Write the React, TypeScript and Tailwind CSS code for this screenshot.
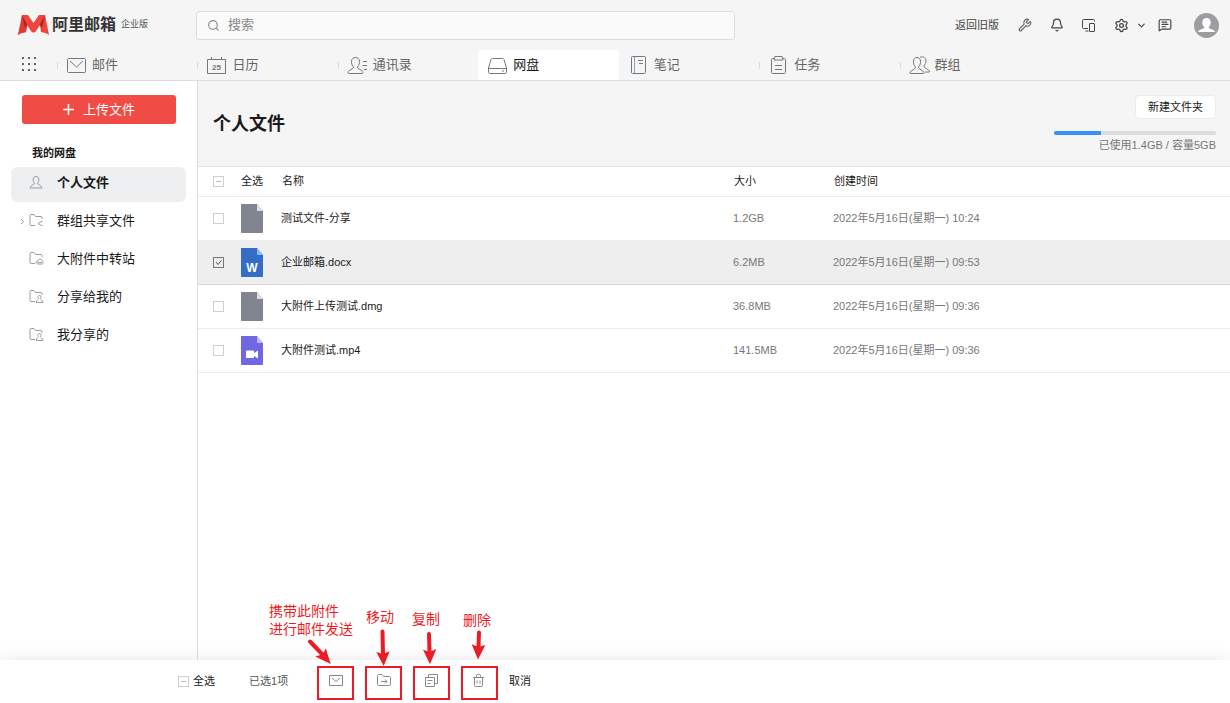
import { useState } from 'react';
import type { ReactNode } from 'react';
import { Bell, ChevronDown, ChevronRight, MessageSquareText, Search, Settings, Wrench } from 'lucide-react';

type FileKind = 'file' | 'word' | 'video';

const files: { id: number; name: string; size: string; created: string; kind: FileKind }[] = [
  { id: 1, name: '测试文件-分享', size: '1.2GB', created: '2022年5月16日(星期一) 10:24', kind: 'file' },
  { id: 2, name: '企业邮箱.docx', size: '6.2MB', created: '2022年5月16日(星期一) 09:53', kind: 'word' },
  { id: 3, name: '大附件上传测试.dmg', size: '36.8MB', created: '2022年5月16日(星期一) 09:36', kind: 'file' },
  { id: 4, name: '大附件测试.mp4', size: '141.5MB', created: '2022年5月16日(星期一) 09:36', kind: 'video' },
];

const fileColors = {
  file: ['#808590', '#dce0e9'],
  word: ['#346dc6', '#94b2f8'],
  video: ['#7068e3', '#c0bafa'],
};

function Logo() {
  return (
    <svg width="31" height="20" viewBox="0 0 31 20" className="shrink-0">
      <path d="M4 0h6l5.500 8L21 0h6l4 20c-2.500-2-5-2.500-8-3l-1-7-4 6c-1.500 2-3.500 2-5 0L9 10l-1 7c-3 .5-5.500 1-8 3z" fill="#ee463c" />
      <path d="M4 0l5 10-1 7c-3 .5-5.500 1-8 3l3-12z" fill="#e03a35" />
      <path d="M4 0l6.500 12L9 10l-2 3z" fill="#a82428" />
      <path d="M27 0l-6.500 12L22 10l2 3z" fill="#a82428" />
    </svg>
  );
}

function TabIcon({ children }: { children: ReactNode }) {
  return (
    <svg width="22" height="20" viewBox="0 0 22 20" fill="none" stroke="currentColor" strokeWidth="1" className="shrink-0 text-[#777]">
      {children}
    </svg>
  );
}

const tabs = [
  {
    label: '邮件',
    icon: (
      <TabIcon>
        <rect x="1.5" y="3.5" width="18" height="14" rx="1" />
        <path d="M4 6l6.5 6L17 6" />
      </TabIcon>
    ),
  },
  {
    label: '日历',
    icon: (
      <TabIcon>
        <path d="M1.500 4.500h18v14h-18zM5.500 2v3M15.500 2v3" />
        <text x="10.500" y="15" textAnchor="middle" fontSize="8" fontWeight="700" fill="currentColor" stroke="none">25</text>
      </TabIcon>
    ),
  },
  {
    label: '通讯录',
    icon: (
      <TabIcon>
        <path d="M6.500 12C3.500 9 3.500 2.500 8.500 2.500S13.500 9 10.500 12c-.5 2.500 5.500 2.500 5.500 5.500 0 .8-.5 1-1 1H2c-.6 0-1-.2-1-1C1 14.500 7 14.500 6.500 12zM16 6.500h4M15.500 10.500H20M17 14.500h3" />
      </TabIcon>
    ),
  },
  {
    label: '网盘',
    icon: (
      <TabIcon>
        <path d="M5.500 3.500h10c.8 0 1.300.4 1.500 1l2.500 8.500v4c0 .9-.6 1.500-1.500 1.500H3c-.9 0-1.500-.6-1.500-1.500v-4L4 4.500c.2-.6.700-1 1.500-1zM2 13.500h17M15 16h2" />
      </TabIcon>
    ),
  },
  {
    label: '笔记',
    icon: (
      <TabIcon>
        <rect x="3.500" y="1.500" width="14" height="17" rx="1" />
        <path d="M6.500 2v16" stroke="#7aa7cf" />
        <path d="M10 5.500h5M11 8.500h4" />
      </TabIcon>
    ),
  },
  {
    label: '任务',
    icon: (
      <TabIcon>
        <path d="M6 3.500H4.500c-.6 0-1 .4-1 1v13c0 .6.400 1 1 1h12c.6 0 1-.4 1-1v-13c0-.6-.4-1-1-1H15M7 1.500h7l1 3.500H6zM7 10.500h7M7 14.500h7" />
      </TabIcon>
    ),
  },
  {
    label: '群组',
    icon: (
      <TabIcon>
        <path d="M6.500 12C3.500 9 3.500 2.500 8 2.500s4.500 6.500 1.500 9.500c-.5 2.500 5.500 3 5.500 6 0 .4-.3.500-.5.500h-13c-.4 0-.5-.2-.5-.5 0-3 6-3.500 5.500-6z" />
        <path d="M11 2.500c2-1.500 6-.5 6 3.500 0 2-1 3.500-2 5-.5 2.500 5.500 3 5.500 5.500 0 .4-.3.500-.5.500h-4" />
      </TabIcon>
    ),
  },
];

const folderPath = 'M6 11.500H2c-.6 0-1-.4-1-1v-9c0-.6.400-1 1-1h3L6.500 2.500H12c.6 0 1 .4 1 1V5';
const personPath = 'M9.500 8.500c-1-1-.8-3 1-3s2 2 1 3c0 1.200 2 1.500 2.500 4H7c.4-2.500 2.500-2.800 2.500-4z';

const navItems = [
  { label: '个人文件', icon: <path d="M5.500 7C3.500 5 3.500.5 7 .5S10.500 5 8.500 7c-.3 1.800 4 1.800 4.500 5H1C1.500 8.800 5.800 8.800 5.500 7z" /> },
  { label: '群组共享文件', icon: <><path d={folderPath} /><path d="M12.500 7.500L9 9.500l3.500 2M12 7.500h1.500M12 11.500h1.500" /></>, expandable: true },
  { label: '大附件中转站', icon: <><path d={folderPath} /><path d="M8.500 12c-2.500-1-1.500-3.500.5-3 .5-2.500 3.500-2.500 4 0 2 .5 1.500 3 0 3zM8.500 10.500H13" /></> },
  { label: '分享给我的', icon: <><path d={folderPath} /><path d={personPath} /></> },
  { label: '我分享的', icon: <><path d={folderPath} /><path d={personPath} /></> },
];

const actions = [
  { label: '发送邮件', icon: <path d="M.5 1.500h13v10H.5zM3 4l4 3.500L11 4" /> },
  { label: '移动', icon: <path d="M1.500.5H5L6.500 2.500h6c.6 0 1 .4 1 1v7c0 .6-.4 1-1 1h-11c-.6 0-1-.4-1-1v-9c0-.6.400-1 1-1zM4 7.500h6M8 5.500l2 2-2 2" /> },
  { label: '复制', icon: <path d="M.5 3.500h9v9h-9zM3.500 3V.5h9v9H10M2.500 6.500h5M2.500 9.500h3" /> },
  { label: '删除', icon: <path d="M0 3.500h11M3.500 3V1.500c0-.6.400-1 1-1h2c.6 0 1 .4 1 1V3M1.500 3.500v8c0 .6.400 1 1 1h6c.6 0 1-.4 1-1v-8M4 6.500v3M7 6.500v3" /> },
];

function FileIcon({ kind }: { kind: FileKind }) {
  const [body, fold] = fileColors[kind];
  return (
    <svg width="22" height="29" viewBox="0 0 22 29" className="block">
      <path d="M1 0h15l6 7v21c0 .6-.4 1-1 1H1c-.6 0-1-.4-1-1V1c0-.6.400-1 1-1z" fill={body} />
      <path d="M16 0l6 7h-5c-.6 0-1-.4-1-1z" fill={fold} />
      {kind === 'word' && (
        <text x="11" y="24" textAnchor="middle" fontSize="12" fontWeight="700" fill="#fff">W</text>
      )}
      {kind === 'video' && (
        <path d="M6 14.500h6c.6 0 1 .4 1 1V17l4-2.500v8L13 20v1c0 .6-.4 1-1 1H6c-.6 0-1-.4-1-1v-5.500c0-.6.400-1 1-1z" fill="#fff" />
      )}
    </svg>
  );
}

function Checkbox({ label, checked, partial, onChange }: { label: string; checked: boolean; partial?: boolean; onChange: () => void }) {
  return (
    <span className="relative block h-[11px] w-[11px]">
      <input
        type="checkbox"
        aria-label={label}
        checked={checked}
        onChange={onChange}
        className="block h-[11px] w-[11px] appearance-none border border-[#cfcfcf] bg-white checked:border-[#777] checked:bg-transparent"
      />
      <svg width="11" height="11" viewBox="0 0 11 11" fill="none" className="pointer-events-none absolute inset-0">
        {partial && <path d="M3 5.500h5" stroke="#bbb" />}
        {checked && !partial && <path d="M3 5l2 2.500L8.500 3.500" stroke="#555" />}
      </svg>
    </span>
  );
}

function Annotations() {
  return (
    <div className="pointer-events-none absolute inset-0 text-sm leading-[18px] text-[#ed1c24]">
      <p className="absolute -top-16 -left-12 whitespace-nowrap">携带此附件<br />进行邮件发送</p>
      <p className="absolute -top-[58px] left-[49px] whitespace-nowrap">移动</p>
      <p className="absolute -top-[56px] left-[95px] whitespace-nowrap">复制</p>
      <p className="absolute -top-[55px] left-[146px] whitespace-nowrap">删除</p>
      <svg width="200" height="68" viewBox="0 0 200 68" fill="#ed1c24" stroke="#ed1c24" className="absolute -top-[66px] -left-[17px] max-w-none">
        <path d="M10 41.500L22 54M82.500 31.500L83 54M129 34L129.500 52M179 32.500L178.500 47" strokeWidth="4" strokeLinecap="round" />
        <path d="M30.700 64L15.300 56.500 20.500 55 24 52 25.700 48.300zM83.700 66L76.300 52 83 54 89.700 51.200zM130 64.300L123 49.700 129.500 52 136.300 49zM178 59.500L171.700 44.300 178.500 47 185.300 45z" stroke="none" />
      </svg>
    </div>
  );
}

export default function App() {
  const [activeTab, setActiveTab] = useState('网盘');
  const [activeNav, setActiveNav] = useState('个人文件');
  const [selected, setSelected] = useState<number[]>([2]);

  const allChecked = selected.length === files.length;

  const toggle = (id: number) =>
    setSelected(prev => (prev.includes(id) ? prev.filter(x => x !== id) : [...prev, id]));

  const toggleAll = () => setSelected(allChecked ? [] : files.map(f => f.id));

  return (
    <div className="flex h-screen flex-col bg-white font-['Liberation_Sans','Noto_Sans_CJK_SC',sans-serif] text-[11px] text-[#1a1a1a]">
      <header className="border-b border-[#dcdcdc] bg-[#f5f5f5]">
        <div className="flex h-[50px] items-center">
          <a href="#" className="flex w-[196px] shrink-0 items-center pl-[18px]">
            <Logo />
            <span className="ml-[3px] text-base leading-5 font-bold text-[#333]">阿里邮箱</span>
            <span className="ml-[5px] text-[9px] text-[#555]">企业版</span>
          </a>
          <label className="flex h-[29px] max-w-[539px] flex-1 items-center rounded-[3px] border border-[#dcdcdc] bg-[#fafafa] pl-[10px]">
            <Search size={13} strokeWidth={2} className="text-[#888]" />
            <input
              type="text"
              aria-label="搜索"
              placeholder="搜索"
              className="ml-2 min-w-0 flex-1 bg-transparent text-[13px] outline-none placeholder:text-[#888]"
            />
          </label>
          <div className="ml-auto flex items-center pr-[11px] text-[#444]">
            <a href="#">返回旧版</a>
            <button aria-label="工具" className="ml-[19px]"><Wrench size={14} strokeWidth={2} className="text-[#666]" /></button>
            <button aria-label="通知" className="ml-[18px]"><Bell size={14} strokeWidth={2} /></button>
            <button aria-label="设备" className="ml-[18px]">
              <svg width="14" height="13" viewBox="0 0 14 13" fill="none" stroke="currentColor">
                <path d="M12.500 2.500v-1c0-.6-.4-1-1-1h-10c-.6 0-1 .4-1 1v7c0 .6.400 1 1 1H6M3.500 12h3" />
                <rect x="7.500" y="4.500" width="5" height="8" rx="0.500" />
              </svg>
            </button>
            <button aria-label="设置" className="ml-[18px] flex items-center gap-[7px]">
              <Settings size={15} strokeWidth={2} />
              <ChevronDown size={11} strokeWidth={2.5} />
            </button>
            <button aria-label="反馈" className="ml-[11px]"><MessageSquareText size={14} strokeWidth={2} /></button>
            <button aria-label="账号" className="ml-[22px]">
              <svg width="25" height="25" viewBox="0 0 25 25">
                <circle cx="12.500" cy="12.500" r="12.500" fill="#9b9da0" />
                <path d="M10.500 14.500C7 11.500 7.500 5 12.500 5s5.500 6.500 2 9.500c0 1.500 6 1.500 6.500 4.500H4c.5-3 6.500-3 6.500-4.500z" fill="#fff" />
              </svg>
            </button>
          </div>
        </div>
        <div className="flex h-[30px]">
          <button aria-label="应用" className="flex w-[57px] shrink-0 items-center pb-[2px] pl-[22px] text-[#555]">
            <svg width="14" height="14" viewBox="0 0 14 14" fill="currentColor">
              {[0, 6, 12].map(y => [0, 6, 12].map(x => <rect key={`${x}-${y}`} x={x} y={y} width="2" height="2" rx="0.500" />))}
            </svg>
          </button>
          <nav className="mr-[190px] grid flex-1 grid-cols-7">
            {tabs.map((tab, idx) => {
              const active = tab.label === activeTab;
              const plain = !active && tabs[idx - 1]?.label !== activeTab;
              return (
                <button
                  key={tab.label}
                  onClick={() => setActiveTab(tab.label)}
                  className={`flex items-center rounded-t text-[13px] ${active ? 'bg-white text-[#1a1a1a]' : 'text-[#666]'}`}
                >
                  <span className={`mr-2 h-[7px] w-px ${plain ? 'bg-[#dcdcdc]' : ''}`} />
                  {tab.icon}
                  <span className="ml-1 pb-px">{tab.label}</span>
                </button>
              );
            })}
          </nav>
        </div>
      </header>

      <div className="flex min-h-0 flex-1">
        <aside className="w-[198px] shrink-0 border-r border-[#dcdcdc] px-[11px] pt-[14px]">
          <button className="mx-[11px] flex h-[29px] w-[154px] items-center justify-center gap-[9px] rounded-[3px] bg-[#f04b44] text-[13px] text-white">
            <svg width="11" height="11" viewBox="0 0 11 11" stroke="currentColor" strokeWidth="1.500"><path d="M5.500 0v11M0 5.500h11" /></svg>
            上传文件
          </button>
          <h2 className="mt-[21px] mb-[6px] pl-[21px] leading-4 font-bold">我的网盘</h2>
          <nav className="flex flex-col gap-[3px]">
            {navItems.map(item => {
              const active = item.label === activeNav;
              return (
                <button
                  key={item.label}
                  onClick={() => setActiveNav(item.label)}
                  className={`flex h-[35px] items-center rounded-md pb-[3px] text-[13px] ${active ? 'bg-[#eeeff1] font-bold' : ''}`}
                >
                  <span className="w-[18px] pl-[7px] text-[#888]">
                    {item.expandable && <ChevronRight size={9} strokeWidth={2.5} />}
                  </span>
                  <svg width="15" height="13" viewBox="0 0 15 13" fill="none" stroke="#9a9da3" strokeWidth="1" className="mb-[2px]">{item.icon}</svg>
                  <span className="ml-[13px]">{item.label}</span>
                </button>
              );
            })}
          </nav>
        </aside>

        <main className="min-w-0 flex-1">
          <div className="flex justify-between bg-[#f5f5f5] pt-[14px] pr-[14px] pb-[13px] pl-[15px]">
            <h1 className="mt-[15px] text-lg leading-7 font-bold">个人文件</h1>
            <div className="flex w-[162px] flex-col items-end">
              <button className="h-6 rounded border border-[#ececec] bg-white px-3">新建文件夹</button>
              <div className="mt-3 h-1 w-full overflow-hidden rounded-sm bg-[#dcdcdc]">
                <div className="h-full w-[29%] bg-[#3a8ff7]" />
              </div>
              <p className="mt-[2px] leading-4 text-[#777]">已使用1.4GB / 容量5GB</p>
            </div>
          </div>
          <table className="w-full table-fixed border-t border-[#e4e4e4] text-left">
            <thead>
              <tr className="h-[30px] border-b border-[#ececec]">
                <th className="w-[43px] pl-[15px]">
                  <Checkbox label="全选文件" checked={allChecked} partial={selected.length > 0 && !allChecked} onChange={toggleAll} />
                </th>
                <th className="w-10 font-normal">全选</th>
                <th className="pl-px font-normal">名称</th>
                <th className="w-[100px] pl-px font-normal">大小</th>
                <th className="w-[397px] pl-px font-normal">创建时间</th>
              </tr>
            </thead>
            <tbody>
              {files.map(file => {
                const checked = selected.includes(file.id);
                return (
                  <tr key={file.id} className={`h-11 border-b ${checked ? 'border-[#dcdcdc] bg-[#eee]' : 'border-[#ececec]'}`}>
                    <td className="pl-[15px]">
                      <Checkbox label={file.name} checked={checked} onChange={() => toggle(file.id)} />
                    </td>
                    <td><FileIcon kind={file.kind} /></td>
                    <td className="truncate">{file.name}</td>
                    <td className="text-[#777]">{file.size}</td>
                    <td className="text-[#777]">{file.created}</td>
                  </tr>
                );
              })}
            </tbody>
          </table>
        </main>
      </div>

      <footer className="relative flex h-[43px] shrink-0 items-center bg-white pl-[178px] shadow-[0_-2px_16px_rgba(0,0,0,0.08)]">
        <Checkbox label="全选" checked={allChecked} partial={selected.length > 0 && !allChecked} onChange={toggleAll} />
        <button className="ml-1" onClick={toggleAll}>全选</button>
        <span className="ml-[34px] w-[68px] text-[#555]">已选{selected.length}项</span>
        <div className="relative mb-[3px] flex gap-[11px] self-end">
          {actions.map(action => (
            <button
              key={action.label}
              aria-label={action.label}
              className="flex h-[34px] w-[37px] items-center justify-center border-2 border-[#ed1c24] pb-[5px] text-[#888]"
            >
              <svg width="14" height="13" viewBox="0 0 14 13" fill="none" stroke="currentColor">{action.icon}</svg>
            </button>
          ))}
          <Annotations />
        </div>
        <button className="ml-[11px]" onClick={() => setSelected([])}>取消</button>
      </footer>
    </div>
  );
}
